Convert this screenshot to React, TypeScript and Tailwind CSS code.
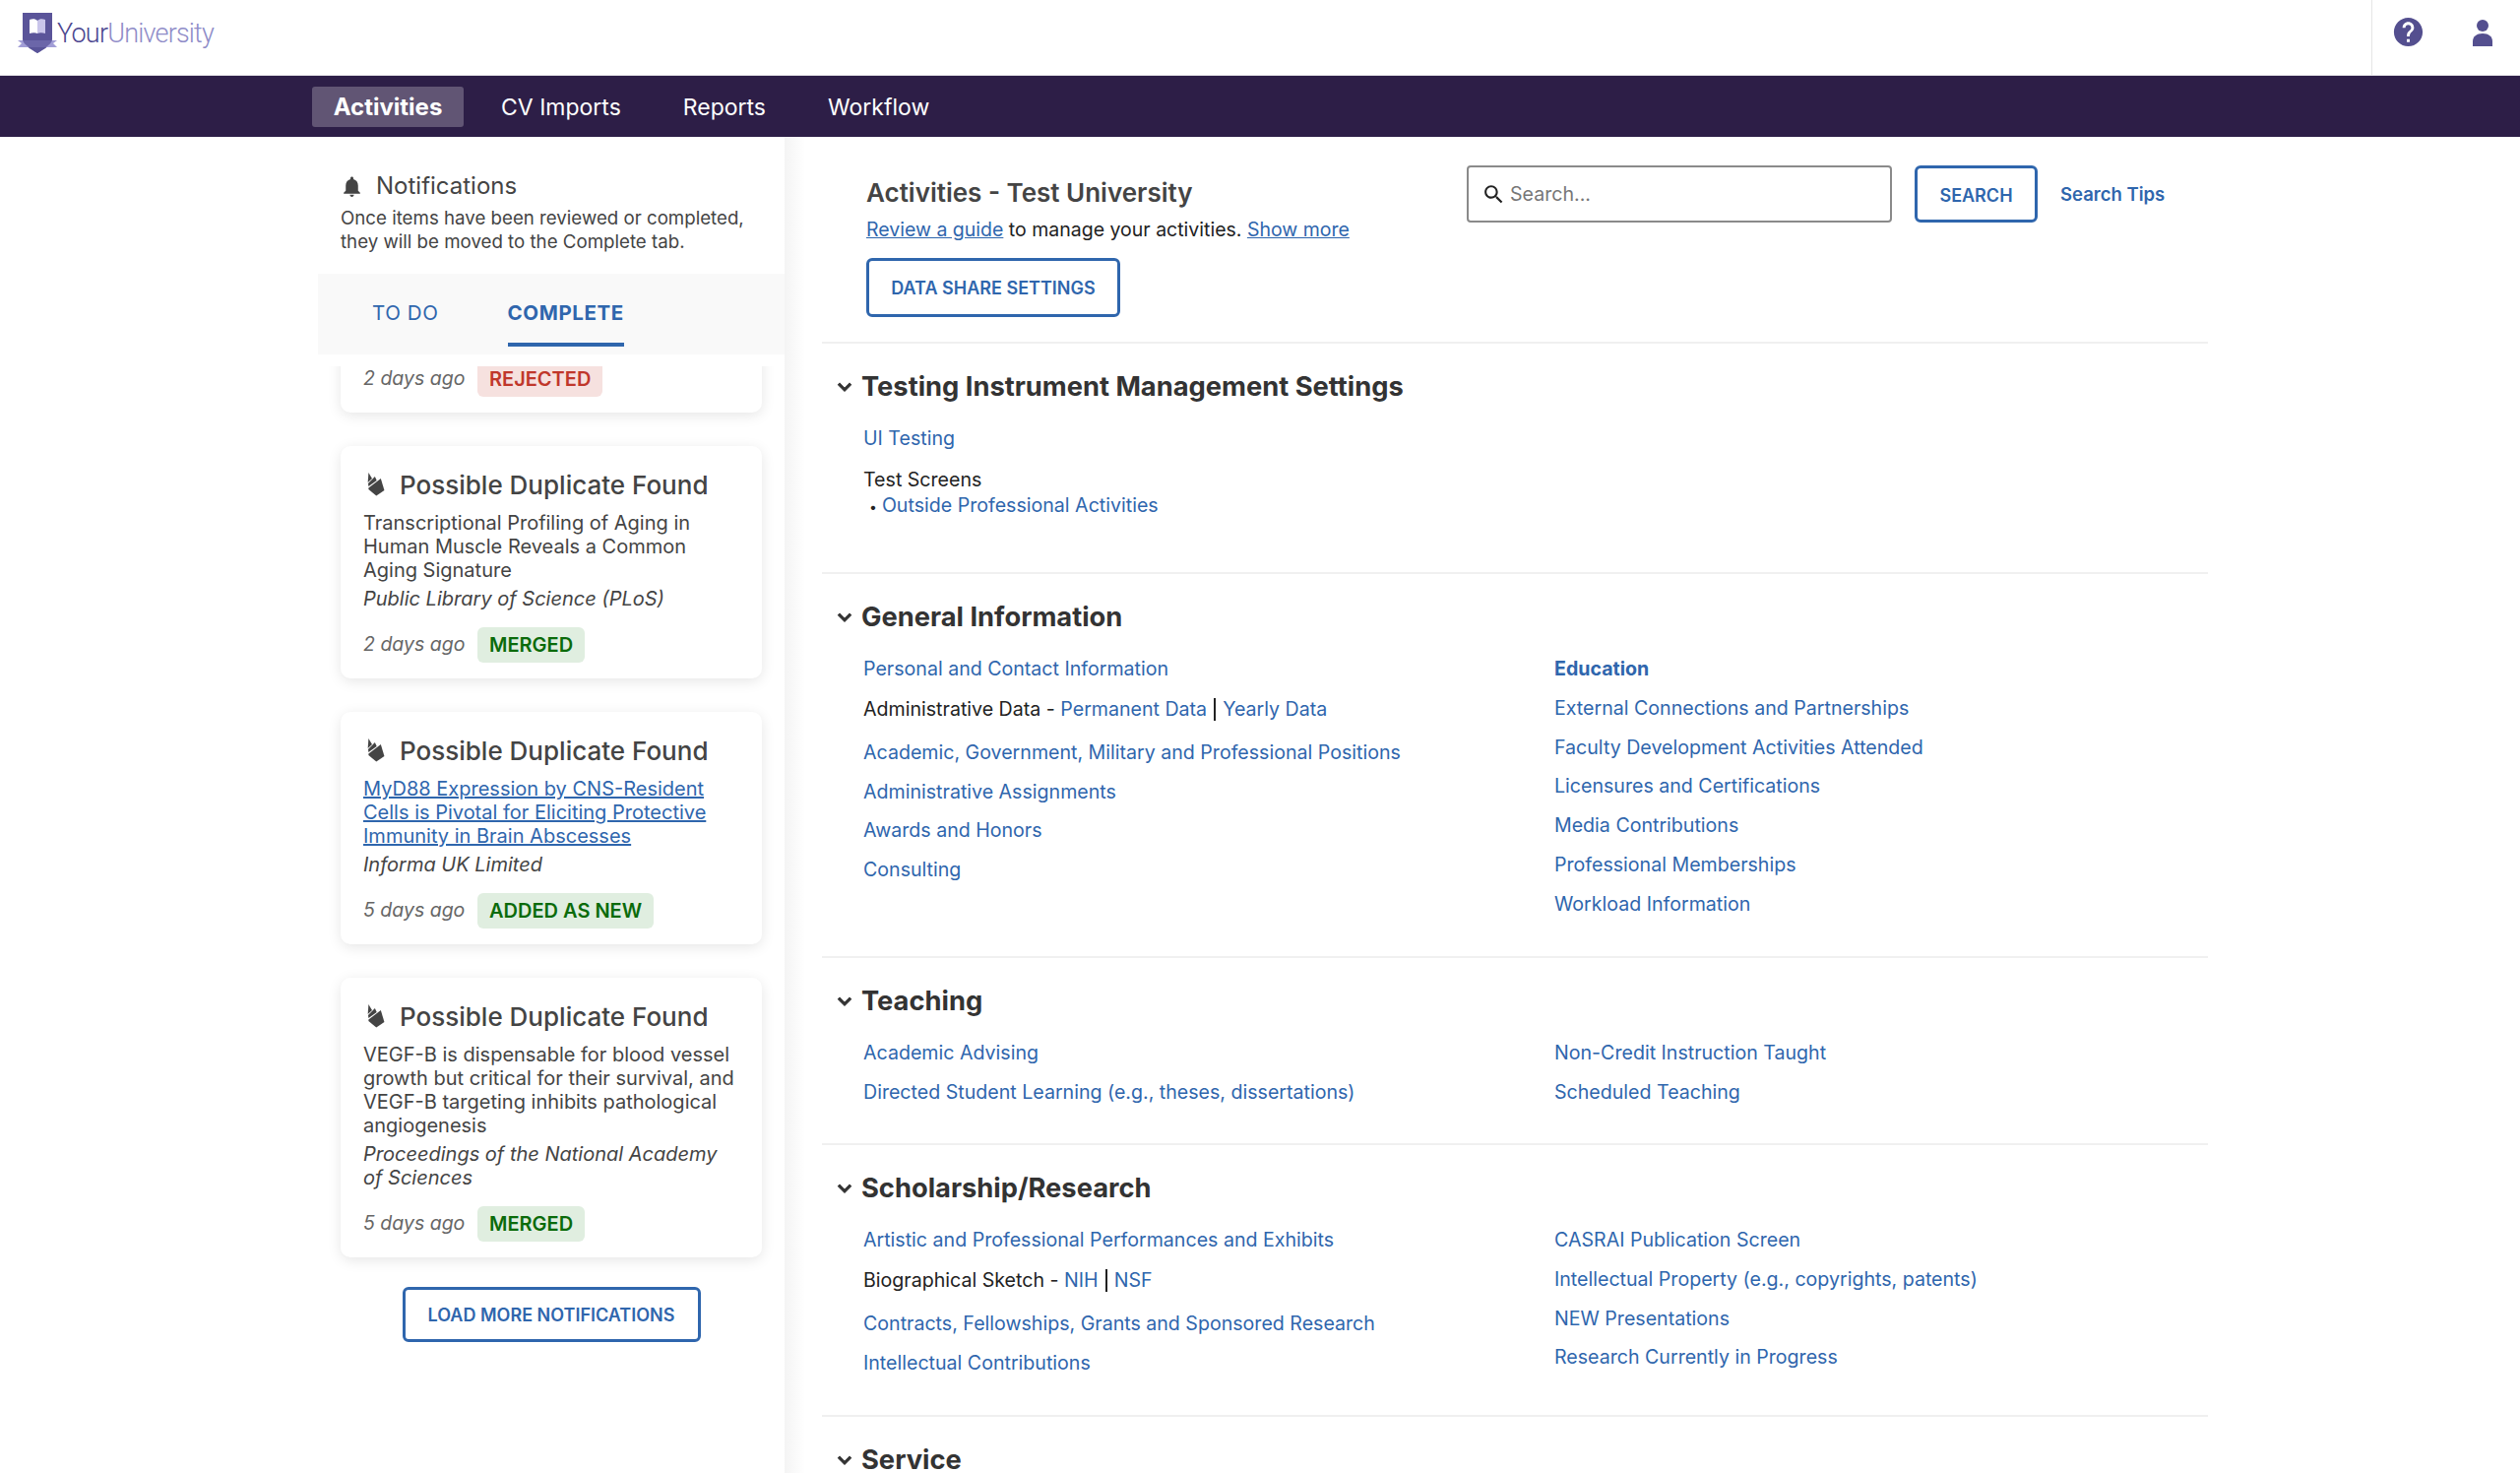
import type { ReactNode } from "react";

const CHEVRON = "M16.59 8.59L12 13.17 7.41 8.59 6 10l6 6 6-6z";
const BELL =
  "M12 22c1.1 0 2-.9 2-2h-4c0 1.1.89 2 2 2zm6-6v-5c0-3.07-1.64-5.64-4.5-6.32V4c0-.83-.67-1.5-1.5-1.5s-1.5.67-1.5 1.5v.68C7.63 5.36 6 7.92 6 11v5l-2 2v1h16v-1l-2-2z";
const SEARCH =
  "M15.5 14h-.79l-.28-.27C15.41 12.59 16 11.11 16 9.5 16 5.91 13.09 3 9.5 3S3 5.91 3 9.5 5.91 16 9.5 16c1.61 0 3.09-.59 4.23-1.57l.27.28v.79l5 4.99L20.49 19l-4.99-5zm-6 0C7.01 14 5 11.99 5 9.5S7.01 5 9.5 5 14 7.01 14 9.5 11.99 14 9.5 14z";
const HELP =
  "M12 2C6.48 2 2 6.48 2 12s4.48 10 10 10 10-4.48 10-10S17.52 2 12 2zm1 17h-2v-2h2v2zm2.07-7.75l-.9.92C13.45 12.9 13 13.5 13 15h-2v-.5c0-1.1.45-2.1 1.17-2.83l1.24-1.26c.37-.36.59-.86.59-1.41 0-1.1-.9-2-2-2s-2 .9-2 2H8c0-2.21 1.79-4 4-4s4 1.79 4 4c0 .88-.36 1.68-.93 2.25z";

const Glyph = ({ d, className }: { d: string; className: string }) => (
  <svg viewBox="0 0 24 24" fill="currentColor" className={className}>
    <path d={d} />
  </svg>
);

const Logo = () => (
  <div className="flex items-start">
    <svg viewBox="0 0 40 42" className="w-[40px] h-[42px] mt-[13px] ml-[18px]">
      <path d="M5 0h30v27c0 5-8 10-15 14C13 37 5 32 5 27z" fill="#5a5499" />
      <path d="M0 28h40l-4 3 4 4H0l4-4z" fill="#a19dd6" />
      <path d="M5 28h30c-1 4-9 9-15 13C14 37 6 32 5 28z" fill="#5a5499" opacity=".75" />
      <path d="M12 7c3-1 6-1 8 1v13c-2-1-5-1-8 0z" fill="#ffffff" />
      <path d="M28 7c-3-1-6-1-8 1v13c2-1 5-1 8 0z" fill="#c9c5ea" />
    </svg>
    <div className="font-[Roboto,sans-serif] font-light text-[27px] leading-[34px] mt-[17px] tracking-[-0.8px]">
      <span className="text-[#4b468f]">Your</span>
      <span className="text-[#8f8cc8]">University</span>
    </div>
  </div>
);

const Header = () => (
  <header className="h-[77px] flex justify-between border-b border-[#e2e0e6]">
    <Logo />
    <div className="flex border-l border-[#e6e6e6] w-[151px] text-[#544f8f]">
      <Glyph d={HELP} className="w-[35px] h-[35px] ml-[19px] mt-[15px]" />
      <svg viewBox="0 0 20 27" fill="currentColor" className="w-[20px] h-[27px] ml-[48px] mt-[20px]">
        <circle cx="10" cy="6" r="6" />
        <path d="M0 27V22c0-5 4-8 10-8s10 3 10 8v5z" />
      </svg>
    </div>
  </header>
);

const Nav = () => (
  <nav className="h-[62px] bg-[#2d1e47] flex items-center pl-[317px] text-white text-[23px]">
    <span className="h-[41px] w-[154px] pt-[2px] bg-[#615574] rounded-[3px] flex items-center justify-center font-bold text-[24px]">Activities</span>
    <span className="ml-[38px] pt-[2px]">CV Imports</span>
    <span className="ml-[63px] pt-[2px]">Reports</span>
    <span className="ml-[63px] pt-[2px]">Workflow</span>
  </nav>
);

const Pill = ({ status }: { status: string }) => {
  const tone =
    status === "REJECTED" ? "bg-[#f6e1df] text-[#c0372b]" : "bg-[#e0eee0] text-[#0b6b0b]";
  return (
    <span className={`h-[36px] px-[12px] rounded-[6px] flex items-center text-[20px] font-semibold whitespace-nowrap ${tone}`}>
      {status}
    </span>
  );
};

const Meta = ({ ago, status }: { ago: string; status: string }) => (
  <div className="flex items-center gap-[12px]">
    <span className="italic text-[19.5px] text-[#666666] w-[104px] whitespace-nowrap">{ago}</span>
    <Pill status={status} />
  </div>
);

const DuplicateIcon = () => (
  <svg
    viewBox="0 0 13 24"
    preserveAspectRatio="none"
    className="w-[18px] h-[24px] ml-[4px] mr-[15px] text-[#444444]"
    fill="currentColor"
  >
    <path d="M1 0L3.6 6 0.5 10z" />
    <path d="M5.7 4L7 8 1 14 0.7 11z" />
    <path d="M10 6L12.6 18 6.7 23.6 1 17V15.5z" />
  </svg>
);

type Notice = {
  title: ReactNode;
  source: string;
  ago: string;
  status: string;
};

const notices: Notice[] = [
  {
    title: "Transcriptional Profiling of Aging in Human Muscle Reveals a Common Aging Signature",
    source: "Public Library of Science (PLoS)",
    ago: "2 days ago",
    status: "MERGED",
  },
  {
    title: (
      <a className="text-[#2f66ad] underline">
        MyD88 Expression by CNS-Resident Cells is Pivotal for Eliciting Protective Immunity in Brain Abscesses
      </a>
    ),
    source: "Informa UK Limited",
    ago: "5 days ago",
    status: "ADDED AS NEW",
  },
  {
    title: "VEGF-B is dispensable for blood vessel growth but critical for their survival, and VEGF-B targeting inhibits pathological angiogenesis",
    source: "Proceedings of the National Academy of Sciences",
    ago: "5 days ago",
    status: "MERGED",
  },
];

const cardClass = "bg-white rounded-[10px] shadow-[0_3px_14px_rgba(0,0,0,0.1)] px-[23px]";

const NoticeCard = ({ notice }: { notice: Notice }) => (
  <div className={`${cardClass} pt-[21px] pb-[16px] mt-[34px]`}>
    <div className="flex items-center h-[36px] text-[26px] font-medium text-[#444444] whitespace-nowrap">
      <DuplicateIcon />
      Possible Duplicate Found
    </div>
    <div className="mt-[9px] text-[20px] leading-[24px] text-[#444444]">{notice.title}</div>
    <div className="mt-[5px] mb-[17px] text-[20px] leading-[24px] italic text-[#444444]">{notice.source}</div>
    <Meta ago={notice.ago} status={notice.status} />
  </div>
);

const Notifications = () => (
  <aside className="w-[797px] pl-[323px] shrink-0">
    <div className="pl-[23px] pt-[35px] pr-[20px]">
      <div className="flex items-center h-[30px] gap-[12px] text-[24px] text-[#444444]">
        <Glyph d={BELL} className="w-[25px] h-[25px] -ml-[1px]" />
        Notifications
      </div>
      <p className="mt-[6px] text-[18.7px] leading-[24px] text-[#444444]">
        Once items have been reviewed or completed, they will be moved to the Complete tab.
      </p>
    </div>
    <div className="mt-[20px] h-[82px] bg-[#f9f9f9] flex pl-[55px] gap-[70px] text-[20.5px] tracking-[0.6px] text-[#2f66ad]">
      <span className="h-[74px] pt-[10px] flex items-center border-b-4 border-transparent">TO DO</span>
      <span className="h-[74px] pt-[10px] flex items-center font-bold border-b-4 border-[#2f66ad]">COMPLETE</span>
    </div>
    <div className="mt-[12px] h-[1124px] overflow-hidden px-[23px] pb-[20px]">
      <div className={`${cardClass} pt-[18px] pb-[16px] -mt-[23px]`}>
        <Meta ago="2 days ago" status="REJECTED" />
      </div>
      {notices.map((n) => (
        <NoticeCard key={n.source} notice={n} />
      ))}
      <button className="block mx-auto mt-[30px] w-[303px] h-[56px] border-[3px] border-[#2f66ad] rounded-[6px] text-[18px] font-semibold text-[#2f66ad]">
        LOAD MORE NOTIFICATIONS
      </button>
    </div>
  </aside>
);

const OutlineButton = ({ label, className }: { label: string; className: string }) => (
  <button className={`border-[3px] border-[#2f66ad] rounded-[6px] text-[18px] font-semibold text-[#2f66ad] ${className}`}>
    {label}
  </button>
);

const Link = ({ children, bold }: { children: ReactNode; bold?: boolean }) => (
  <a className={`text-[#2f66ad] ${bold ? "font-bold" : ""}`}>{children}</a>
);

const Row = ({ children }: { children: ReactNode }) => (
  <div className="h-[39.75px] flex items-center whitespace-nowrap">{children}</div>
);

const SplitRow = ({ label, first, second }: { label: string; first: string; second: string }) => (
  <div className="h-[42px] mb-[3px] flex items-center whitespace-nowrap text-[#222222]">
    {label} -&nbsp;<Link>{first}</Link>
    <span className="mx-[7px] h-[23px] border-l-2 border-[#222222]" />
    <Link>{second}</Link>
  </div>
);

const LinkRows = ({ items }: { items: string[] }) => (
  <>
    {items.map((item) => (
      <Row key={item}>
        <Link bold={item === "Education"}>{item}</Link>
      </Row>
    ))}
  </>
);

const Section = ({ title, height, children }: { title: string; height: string; children: ReactNode }) => (
  <section className={`border-t-2 border-[#f0f0f0] pt-[26px] ${height}`}>
    <div className="flex items-center h-[36px] text-[27.3px] font-bold text-[#333333] whitespace-nowrap">
      <svg viewBox="0 0 24 24" fill="currentColor" stroke="currentColor" strokeWidth="1" className="w-[26px] h-[26px] ml-[10px] mr-[4px] text-[#333333]">
        <path d={CHEVRON} />
      </svg>
      {title}
    </div>
    <div className="mt-[15px] pl-[42px] text-[19.6px]">{children}</div>
  </section>
);

const Columns = ({ left, right }: { left: ReactNode; right: ReactNode }) => (
  <div className="grid grid-cols-[702px_1fr]">
    <div>{left}</div>
    <div>{right}</div>
  </div>
);

const Main = () => (
  <main className="ml-[17px] w-[1408px]">
    <div className="h-[208px] pt-[29px] pl-[45px] flex items-start">
      <div className="w-[610px]">
        <h1 className="text-[26px] leading-[58px] -mt-[1px] font-semibold text-[#444444]">Activities - Test University</h1>
        <p className="-mt-[6px] text-[19.5px] leading-[28px] text-[#222222]">
          <a className="text-[#2f66ad] underline">Review a guide</a> to manage your activities.{" "}
          <a className="text-[#2f66ad] underline">Show more</a>
        </p>
        <OutlineButton label="DATA SHARE SETTINGS" className="mt-[15px] w-[258px] h-[60px]" />
      </div>
      <div className="w-[432px] h-[58px] border-2 border-[#8a8a8a] rounded-[4px] flex items-center pl-[13px] gap-[4px] text-[19.6px]">
        <Glyph d={SEARCH} className="w-[25px] h-[25px] text-[#222222]" />
        <input placeholder="Search..." className="flex-1 pt-[2px] outline-none placeholder:text-[#777777]" />
      </div>
      <OutlineButton label="SEARCH" className="ml-[23px] w-[125px] h-[58px] pt-[2px]" />
      <a className="ml-[23px] h-[58px] pt-[2px] flex items-center text-[18.5px] font-semibold text-[#2f66ad] whitespace-nowrap">Search Tips</a>
    </div>

    <Section title="Testing Instrument Management Settings" height="h-[234px]">
      <Row><Link>UI Testing</Link></Row>
      <div className="mt-[8px] leading-[26px] text-[#222222]">Test Screens</div>
      <div className="leading-[26px] pl-[6px] text-[#222222]">
        <span className="text-[14px] mr-[5px]">•</span><Link>Outside Professional Activities</Link>
      </div>
    </Section>

    <Section title="General Information" height="h-[390px]">
      <Columns
        left={
          <>
            <LinkRows items={["Personal and Contact Information"]} />
            <SplitRow label="Administrative Data" first="Permanent Data" second="Yearly Data" />
            <LinkRows items={["Academic, Government, Military and Professional Positions", "Administrative Assignments", "Awards and Honors", "Consulting"]} />
          </>
        }
        right={
          <LinkRows
            items={[
              "Education",
              "External Connections and Partnerships",
              "Faculty Development Activities Attended",
              "Licensures and Certifications",
              "Media Contributions",
              "Professional Memberships",
              "Workload Information",
            ]}
          />
        }
      />
    </Section>

    <Section title="Teaching" height="h-[190px]">
      <Columns
        left={<LinkRows items={["Academic Advising", "Directed Student Learning (e.g., theses, dissertations)"]} />}
        right={<LinkRows items={["Non-Credit Instruction Taught", "Scheduled Teaching"]} />}
      />
    </Section>

    <Section title="Scholarship/Research" height="h-[276px]">
      <Columns
        left={
          <>
            <LinkRows items={["Artistic and Professional Performances and Exhibits"]} />
            <SplitRow label="Biographical Sketch" first="NIH" second="NSF" />
            <LinkRows items={["Contracts, Fellowships, Grants and Sponsored Research", "Intellectual Contributions"]} />
          </>
        }
        right={
          <LinkRows
            items={[
              "CASRAI Publication Screen",
              "Intellectual Property (e.g., copyrights, patents)",
              "NEW Presentations",
              "Research Currently in Progress",
            ]}
          />
        }
      />
    </Section>

    <Section title="Service" height="h-[60px]">
      <div />
    </Section>
  </main>
);

export default function App() {
  return (
    <div className="h-[1496px] overflow-hidden bg-white font-[Inter,sans-serif]">
      <Header />
      <Nav />
      <div className="flex h-[1357px]">
        <Notifications />
        <div className="w-[21px] shrink-0 bg-gradient-to-r from-[#f4f4f4] to-white" />
        <Main />
      </div>
    </div>
  );
}
